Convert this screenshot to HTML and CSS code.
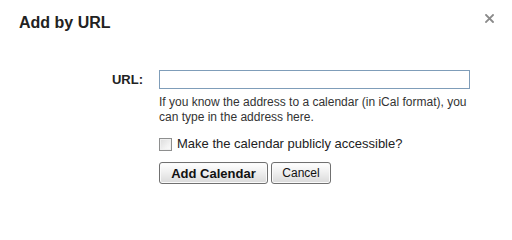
FILE: index.html
```html
<!DOCTYPE html>
<html>
<head>
<meta charset="utf-8">
<link rel="stylesheet" href="styles.css">
</head>
<body>
<div class="dialog">
  <div class="header">
    <h1 class="title">Add by URL</h1>
    <span class="close" aria-label="Close">
      <svg width="9" height="9" viewBox="0 0 9 9"><path d="M1 1L8 8M8 1L1 8" stroke="#8a8a8a" stroke-width="1.8" stroke-linecap="square"/></svg>
    </span>
  </div>
  <form class="form">
    <label class="label" for="url">URL:</label>
    <div class="field">
      <input id="url" class="input" type="text">
      <p class="help">If you know the address to a calendar (in iCal format), you can type in the address here.</p>
      <label class="check"><input type="checkbox" class="checkbox"><span>Make the calendar publicly accessible?</span></label>
      <div class="buttons">
        <button type="button" class="btn btn-primary">Add Calendar</button>
        <button type="button" class="btn btn-cancel">Cancel</button>
      </div>
    </div>
  </form>
</div>
</body>
</html>
```
FILE: styles.css
```css
html, body {
  margin: 0;
  padding: 0;
  background: #fff;
}
body {
  font-family: "Liberation Sans", Arial, sans-serif;
  color: #222;
}
.dialog {
  width: 512px;
  height: 215px;
}
.header {
  display: flex;
  justify-content: space-between;
  align-items: flex-start;
  padding: 13px 19px 0 19px;
}
.title {
  margin: 0;
  font-size: 16px;
  line-height: 20px;
  font-weight: bold;
  color: #222;
}
.close {
  display: block;
  width: 9px;
  height: 9px;
  margin-top: 1px;
  margin-right: -1px;
}
.close svg {
  display: block;
}
.form {
  display: grid;
  grid-template-columns: 143px 312px;
  column-gap: 16px;
  margin-top: 37px;
}
.label {
  text-align: right;
  font-size: 13px;
  font-weight: bold;
  line-height: 19px;
  height: 19px;
  color: #222;
}
.field {
  display: flex;
  flex-direction: column;
  align-items: flex-start;
}
.input {
  box-sizing: border-box;
  width: 311px;
  height: 19px;
  margin: 0;
  border: 1px solid #7f9db9;
  padding: 1px 3px;
  font-family: inherit;
  font-size: 12px;
}
.help {
  margin: 6px 0 0 0;
  font-size: 12px;
  line-height: 15px;
  color: #333;
  width: 312px;
}
.check {
  display: flex;
  align-items: center;
  margin-top: 11px;
  font-size: 13px;
  line-height: 16px;
  color: #222;
}
.checkbox {
  -webkit-appearance: none;
  appearance: none;
  box-sizing: border-box;
  width: 13px;
  height: 13px;
  margin: 0 5px 0 0;
  border: 1px solid #8e8f8f;
  border-radius: 0;
  background: linear-gradient(135deg, #dcdcdc, #f4f4f4 70%, #fbfbfb);
  box-shadow: inset 0 0 0 1px #f0f0f0;
}
.buttons {
  display: flex;
  gap: 3px;
  margin-top: 10px;
}
.btn {
  box-sizing: border-box;
  height: 22px;
  margin: 0;
  padding: 0 8px;
  border: 1px solid #707070;
  border-radius: 3px;
  background: linear-gradient(#ffffff, #f0f0f0 45%, #dadada);
  font-family: inherit;
  font-size: 12px;
  color: #111;
  box-shadow: inset 0 0 0 1px #fafafa;
}
.btn-primary {
  width: 109px;
  font-size: 13px;
  font-weight: bold;
}
.btn-cancel {
  width: 60px;
}
```
